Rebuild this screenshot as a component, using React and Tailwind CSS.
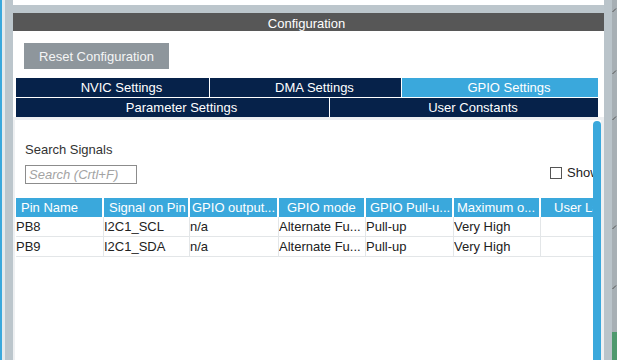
const cols = [
  { w: 'w-[88px]', h: 'Pin Name', hp: 'pl-[5px]' },
  { w: 'w-[86px]', h: 'Signal on Pin', hp: 'pl-[5px]' },
  { w: 'w-[89px]', h: 'GPIO output...', hp: 'pl-[2px]' },
  { w: 'w-[87px]', h: 'GPIO mode', hp: 'pl-[8px]' },
  { w: 'w-[88px]', h: 'GPIO Pull-u...', hp: 'pl-[4px]' },
  { w: 'w-[87px]', h: 'Maximum o...', hp: 'pl-[3px]' },
  { w: 'flex-1', h: 'User Label', hp: 'pl-[13px]' },
];

const rows = [
  ['PB8', 'I2C1_SCL', 'n/a', 'Alternate Fu...', 'Pull-up', 'Very High', ''],
  ['PB9', 'I2C1_SDA', 'n/a', 'Alternate Fu...', 'Pull-up', 'Very High', ''],
];

export default function App() {
  return (
    <div className="w-[617px] h-[360px] overflow-hidden flex bg-[#bcc6cc] font-['Liberation_Sans',Arial,sans-serif] text-[13px]">
      <div className="flex h-full shrink-0">
        <div className="w-[2px] bg-[#3aa8dc]" />
        <div className="w-[3px] bg-[#e4eaed]" />
        <div className="w-[8px] bg-[#bcc6cc]" />
      </div>

      <div className="w-[591px] shrink-0 flex flex-col h-full">
        <div className="h-[5px] bg-white" />
        <div className="h-[8px]" />
        <div className="h-[18px] bg-[#575757] text-white flex items-center justify-center leading-none pt-[2px] pr-[4px]">
          Configuration
        </div>
        <div className="flex-1 bg-white flex flex-col min-h-0">
          <div className="pl-[11px] pt-[12px]">
            <div className="w-[145px] h-[26px] bg-[#8e969c] text-[#f4f5f6] flex items-center justify-center leading-none">
              Reset Configuration
            </div>
          </div>
          <div className="mt-[9px] ml-[3px] w-[582px] flex flex-col gap-px text-white leading-none">
            <div className="flex gap-px h-[19px]">
              <div className="w-[193px] bg-[#06224a] flex items-center justify-center pl-[18px]">NVIC Settings</div>
              <div className="w-[191px] bg-[#06224a] flex items-center justify-center pl-[18px]">DMA Settings</div>
              <div className="flex-1 bg-[#3aa8dc] flex items-center justify-center pl-[18px]">GPIO Settings</div>
            </div>
            <div className="flex gap-px h-[19px]">
              <div className="w-[313px] bg-[#06224a] flex items-center justify-center pl-[18px]">Parameter Settings</div>
              <div className="flex-1 bg-[#06224a] flex items-center justify-center pl-[18px]">User Constants</div>
            </div>
          </div>

          <div className="flex-1 bg-[#eef0f2] pl-[2px] pt-[3px] pr-[3px] flex min-h-0">
            <div className="flex-1 bg-white relative overflow-hidden">
              <div className="pt-[22px]">
                <div className="pl-[10px] leading-[15px] h-[15px] text-[#333]">Search Signals</div>
                <div className="mt-[8px] flex items-start h-[19px]">
                  <div className="ml-[10px] w-[112px] h-[19px] border border-[#8c8c8c] pl-[3px] leading-[17px] italic text-[#a3a3a3] whitespace-nowrap">
                    Search (Crtl+F)
                  </div>
                  <div className="ml-[413px] mt-[2px] w-[12px] h-[12px] border border-[#555] bg-white shrink-0" />
                  <div className="ml-[5px] leading-[15px] text-[#222] whitespace-nowrap">Show</div>
                </div>
                <div className="mt-[14px] ml-[1px]">
                  <div className="flex h-[19px]">
                    {cols.map((c, i) => (
                      <div
                        key={i}
                        className={`${c.w} shrink-0 bg-[#3aa8dc] border-r-2 border-white text-white leading-[19px] whitespace-nowrap overflow-hidden ${c.hp}`}
                      >
                        {c.h}
                      </div>
                    ))}
                  </div>
                  {rows.map((r, ri) => (
                    <div key={ri} className="flex h-[20px] border-b border-[#e3e6e8]">
                      {r.map((v, ci) => (
                        <div
                          key={ci}
                          className={`${cols[ci].w} shrink-0 border-r border-[#e3e6e8] leading-[19px] text-[#222] whitespace-nowrap overflow-hidden`}
                        >
                          {v}
                        </div>
                      ))}
                    </div>
                  ))}
                </div>
              </div>
              <div className="absolute right-0 top-[1px] bottom-0 w-[8px] bg-[#3aa8dc] rounded-t-[4px]" />
            </div>
          </div>
        </div>
      </div>

      <div className="flex h-full shrink-0">
        <div className="w-[8px] bg-[#bac4ca]" />
        <div className="w-[5px] bg-[#a7afb4] relative">
          <svg width="5" height="360" className="absolute inset-0">
            <g stroke="#555" strokeWidth="1">
              <line x1="0.5" y1="12" x2="4" y2="8.5" />
              <line x1="0.5" y1="74" x2="4" y2="70.5" />
              <line x1="0.5" y1="120" x2="4" y2="116.5" />
              <line x1="0.5" y1="229" x2="4" y2="225.5" />
              <line x1="0.5" y1="289" x2="4" y2="285.5" />
            </g>
          </svg>
          <div className="absolute left-0 right-0 bottom-0 h-[28px] bg-[#4f9a6e]" />
        </div>
      </div>
    </div>
  );
}
